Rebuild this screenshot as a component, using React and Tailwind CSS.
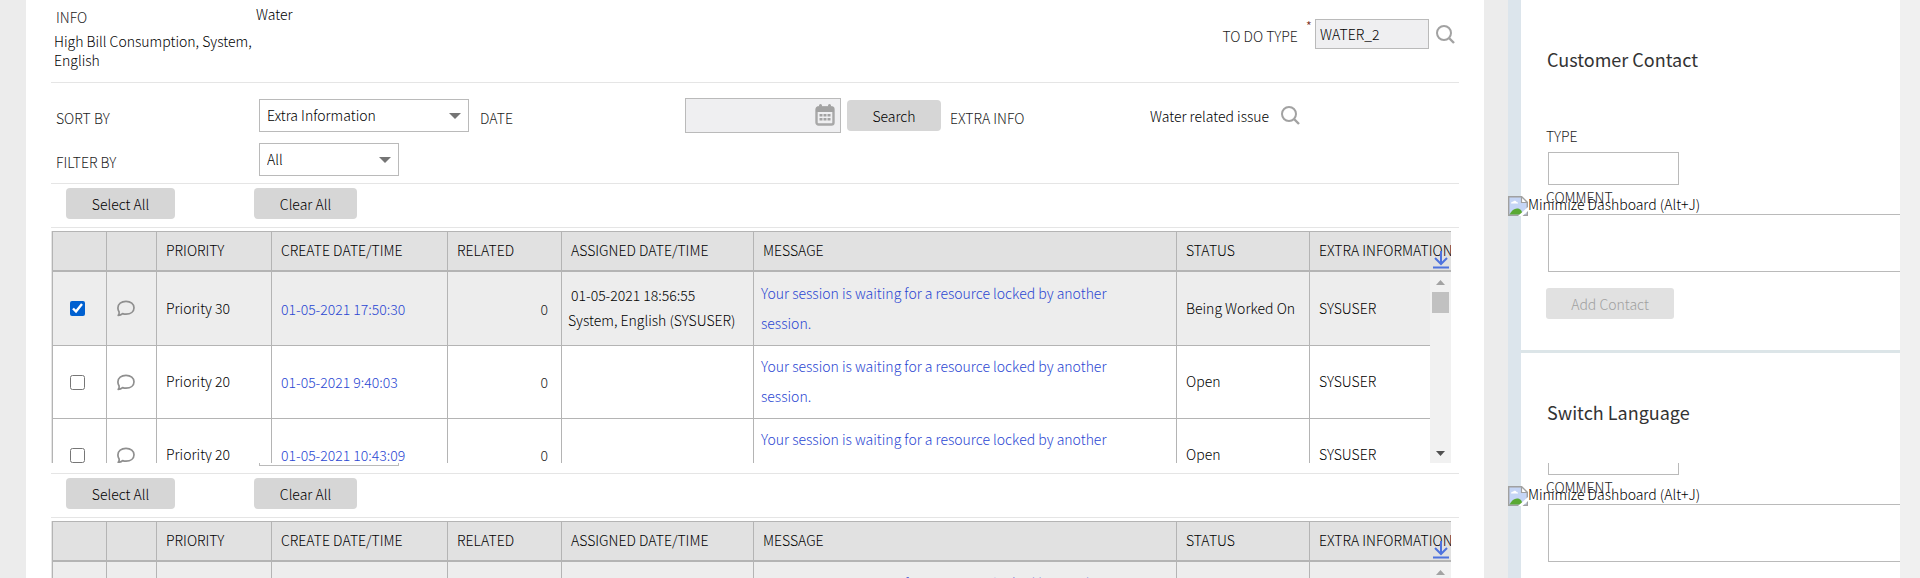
import { useId } from "react";

const rows = [
  { priority: "Priority 30", created: "01-05-2021 17:50:30", assigned: true, status: "Being Worked On", checked: true },
  { priority: "Priority 20", created: "01-05-2021 9:40:03", status: "Open" },
  { priority: "Priority 20", created: "01-05-2021 10:43:09", status: "Open" },
];

const columns = ["PRIORITY", "CREATE DATE/TIME", "RELATED", "ASSIGNED DATE/TIME", "MESSAGE", "STATUS", "EXTRA INFORMATION"];

function SearchIcon() {
  return (
    <svg width="19" height="19" viewBox="0 0 19 19" fill="none" stroke="#a2a2a2" strokeWidth="2" aria-hidden="true">
      <circle cx="8" cy="8" r="7" />
      <path d="M13 13l5 5" strokeWidth="2.4" />
    </svg>
  );
}

function CalendarIcon() {
  return (
    <svg width="20" height="22" viewBox="0 0 20 22" aria-hidden="true">
      <path d="M5.5 1.500v3M14.500 1.500v3" stroke="#a2a2a2" strokeWidth="3" strokeLinecap="round" />
      <rect x="1.500" y="3.500" width="17" height="17" rx="2" fill="#efeff1" stroke="#a8a8a8" strokeWidth="2.400" />
      <path d="M1 8V4.500a2 2 0 0 1 2-2h14a2 2 0 0 1 2 2V8z" fill="#a2a2a2" />
      <path d="M4.500 10h3v2.500h-3zM8.500 10h3v2.500h-3zM12.500 10h3v2.500h-3zM4.500 14h3v2.500h-3zM8.500 14h3v2.500h-3zM12.500 14h3v2.500h-3z" fill="#a2a2a2" />
    </svg>
  );
}

function CommentIcon() {
  return (
    <svg className="block" width="18" height="17" viewBox="0 0 18 17" fill="none" stroke="#8f8f8f" strokeWidth="1.700" strokeLinejoin="round" aria-hidden="true">
      <path d="M1.200 15.300c.9-.9 1.100-2.200.9-3.300C1.300 10.800.9 9.500.9 8 .9 4 4.300 1.300 9 1.300s8 2.700 8 6.500-3.300 6.400-8 6.400c-1.300 0-2.400-.2-3.400-.6-1.200 1.100-2.700 1.700-4.400 1.700z" />
    </svg>
  );
}

function DownloadIcon() {
  return (
    <svg width="16" height="18" viewBox="0 0 16 18" fill="none" stroke="#4f73de" strokeWidth="2" aria-hidden="true">
      <path d="M8 0v12M2 7l6 6 6-6M0 16.500h16" />
    </svg>
  );
}

function BrokenImageIcon() {
  return (
    <svg className="block shrink-0" width="20" height="20" viewBox="0 0 20 20" aria-hidden="true">
      <path d="M.7.7h12.800l5.800 5.800v12.800H.7z" fill="#c5d5f5" stroke="#a0a0a0" strokeWidth="1.400" />
      <path d="M13.500.7v5.800h5.800z" fill="#fff" stroke="#a0a0a0" strokeWidth="1.200" />
      <path d="M3 7.500c0-1.200 1-1.800 2-1.600.5-1.500 3-1.500 3.500.1 1.200 0 1.800.8 1.500 1.500z" fill="#fff" />
      <path d="M1.500 18.600c2-4 4.500-6 7.500-6s4.500 1.500 6 6z" fill="#59a933" />
      <path d="M10 20L20 11v4l-5.500 5z" fill="#fff" />
    </svg>
  );
}

function Select({ id, value, width }) {
  return (
    <div className={"relative " + width}>
      <select id={id} defaultValue={value} className="block h-[33px] w-full appearance-none border border-[#bababa] bg-white pb-0.5 pl-[7px] text-black">
        <option>{value}</option>
      </select>
      <svg className="pointer-events-none absolute top-3.5 right-2" width="12" height="6" viewBox="0 0 12 6" aria-hidden="true">
        <path d="M0 0h12L6 6z" fill="#757575" />
      </svg>
    </div>
  );
}

function GrayButton({ children, className = "" }) {
  return (
    <button type="button" className={"h-[31px] rounded-[4px] bg-[#d6d6d6] text-black " + className}>
      {children}
    </button>
  );
}

function Criteria() {
  const label = "pt-1 text-[#1c1c1c]";
  return (
    <>
      <div className="flex h-[82px] items-start">
        <div className="w-[205px] pl-[3px]">
          <div className="mt-[7px] pl-0.5 leading-5 text-[#1c1c1c]">INFO</div>
          <div className="mt-[5px] leading-[19px]">High Bill Consumption, System, English</div>
        </div>
        <div className="mt-1 leading-5">Water</div>
        <div className="mt-[19px] mr-1 ml-auto flex items-center">
          <label htmlFor="todo-type" className={label}>TO DO TYPE</label>
          <span className="mr-[3px] ml-2 self-start text-[14px] leading-[14px] text-[#7a2a1a]">*</span>
          <input id="todo-type" defaultValue="WATER_2" className="h-[30px] w-[114px] border border-[#bababa] bg-[#efeff1] pl-1" />
          <button type="button" aria-label="Search to do type" className="ml-[7px]"><SearchIcon /></button>
        </div>
      </div>
      <div className="h-[101px] border-t border-[#e5e5e5] pt-[15px]">
        <div className="flex h-[35px] items-center">
          <label htmlFor="sort-by" className={"w-[208px] pl-[5px] " + label}>SORT BY</label>
          <Select id="sort-by" value="Extra Information" width="w-[210px]" />
          <label htmlFor="date" className={"w-[216px] pl-[11px] " + label}>DATE</label>
          <div className="relative">
            <input id="date" className="block h-[35px] w-[156px] border border-[#bababa] bg-[#efeff1] pr-8 pl-2" />
            <button type="button" aria-label="Pick a date" className="absolute top-1.5 right-1.5"><CalendarIcon /></button>
          </div>
          <GrayButton className="ml-1.5 w-[94px]">Search</GrayButton>
          <span className={"w-[209px] pl-[9px] " + label}>EXTRA INFO</span>
          <span>Water related issue</span>
          <button type="button" aria-label="Search extra info" className="ml-3"><SearchIcon /></button>
        </div>
        <div className="mt-2.5 flex items-center">
          <label htmlFor="filter-by" className={"w-[208px] pl-[5px] " + label}>FILTER BY</label>
          <Select id="filter-by" value="All" width="w-[140px]" />
        </div>
      </div>
    </>
  );
}

function Scrollbar() {
  return (
    <div className="absolute top-[41px] right-0 bottom-0 flex w-[21px] flex-col items-center bg-[#f1f1f1]" aria-hidden="true">
      <svg className="mt-2 shrink-0" width="9" height="5" viewBox="0 0 9 5"><path d="M0 5L4.500 0 9 5z" fill="#a3a3a3" /></svg>
      <div className="mt-[7px] h-[21px] w-[17px] shrink-0 bg-[#c1c1c1]" />
      <svg className="mt-auto mb-[7px] shrink-0" width="9" height="5" viewBox="0 0 9 5"><path d="M0 0h9L4.500 5z" fill="#505050" /></svg>
    </div>
  );
}

function Worklist({ height }) {
  const id = useId();
  const cell = "border-b border-l border-[#b4b4b4] p-0 ";
  const text = cell + "pb-0.5 ";
  return (
    <div>
      <div className="flex h-11 items-start gap-[79px] border-t border-[#e5e5e5] pt-1 pl-[15px]">
        <GrayButton className="w-[109px]">Select All</GrayButton>
        <GrayButton className="w-[103px]">Clear All</GrayButton>
      </div>
      <div className="border-t border-[#e5e5e5] pt-[3px]">
        <div className={"relative mr-2 overflow-hidden border-l border-[#e5e5e5] " + height}>
          <table className="w-full table-fixed border-separate border-spacing-0">
            <colgroup>
              <col className="w-[54px]" />
              <col className="w-[50px]" />
              <col className="w-[115px]" />
              <col className="w-[176px]" />
              <col className="w-[114px]" />
              <col className="w-[192px]" />
              <col />
              <col className="w-[133px]" />
              <col className="w-[142px]" />
            </colgroup>
            <thead>
              <tr className="h-[41px] bg-[#e1e1e1] text-left whitespace-nowrap text-black">
                <td className="border-t border-b-2 border-l border-[#b4b4b4]" />
                <td className="border-t border-b-2 border-l border-[#b4b4b4]" />
                {columns.map((c) => (
                  <th key={c} className="border-t border-b-2 border-l border-[#b4b4b4] p-0 pb-0.5 pl-[9px] font-light">{c}</th>
                ))}
              </tr>
            </thead>
            <tbody>
              {rows.map((r, i) => (
                <tr key={i} className={r.checked ? "h-[74px] bg-[#ededed]" : "h-[73px]"}>
                  <td className={cell + "pl-[17px]"}>
                    <input id={id + i} type="checkbox" defaultChecked={r.checked} aria-label={"Select " + r.created} className="block size-[15px] accent-[#0060d0]" />
                  </td>
                  <td className={cell + "pl-2.5"}><CommentIcon /></td>
                  <td className={text + "pl-[9px]"}>{r.priority}</td>
                  <td className={cell + "pl-[9px]"}><a href="#" className="text-[#2a46d2]">{r.created}</a></td>
                  <td className={cell + "pr-[13px] text-right text-[#1c1c1c]"}>0</td>
                  <td className={text + "pl-1.5 leading-[25px]"}>
                    {r.assigned && (
                      <>
                        <div className="pl-[3px]">01-05-2021 18:56:55</div>
                        <div>System, English (SYSUSER)</div>
                      </>
                    )}
                  </td>
                  <td className={text + "pr-8 pl-[7px] leading-[30px]"}>
                    <a href="#" className="text-[#2a46d2]">Your session is waiting for a resource locked by another session.</a>
                  </td>
                  <td className={text + "pl-[9px]"}>{r.status}</td>
                  <td className={text + "pl-[9px]"}>SYSUSER</td>
                </tr>
              ))}
            </tbody>
          </table>
          <Scrollbar />
          <button type="button" aria-label="Download" className="absolute top-5 right-0.5 leading-none"><DownloadIcon /></button>
        </div>
      </div>
    </div>
  );
}

function MinimizeDashboard({ className }) {
  return (
    <button type="button" className={"absolute left-0 flex items-start whitespace-nowrap text-black " + className}>
      <BrokenImageIcon />
      <span className="leading-4">Minimize Dashboard (Alt+J)</span>
    </button>
  );
}

function Comment() {
  const id = useId();
  return (
    <>
      <label htmlFor={id} className="mt-0.5 -ml-0.5 block leading-5 text-[#1c1c1c]">COMMENT</label>
      <textarea id={id} className="mt-[7px] block h-[58px] w-full resize-none border border-r-0 border-[#bababa]" />
    </>
  );
}

export default function App() {
  return (
    <div className="flex min-h-screen bg-[#ececec] font-['Noto_Sans_CJK_SC',sans-serif] text-[14px] leading-5 font-light text-black">
      <main className="ml-[26px] min-w-0 flex-1 bg-white pr-[25px] pl-[25px]">
        <Criteria />
        <Worklist height="h-[232px]" />
        <div className="mb-[7px] ml-[208px] h-[3px] w-[140px] border border-t-0 border-[#bababa]" />
        <Worklist height="h-[57px]" />
      </main>

      <aside className="relative ml-6 w-[392px] shrink-0 border-l-[13px] border-[#dce5ec] bg-white">
        <section className="h-[353px] border-b-[3px] border-[#dce5e8] pl-[27px]">
          <h2 className="-ml-px pt-[45px] text-[18px] leading-7 font-normal text-[#333]">Customer Contact</h2>
          <label htmlFor="type" className="mt-[53px] -ml-0.5 block leading-5 text-[#1c1c1c]">TYPE</label>
          <input id="type" className="mt-1.5 block h-[33px] w-[131px] border border-[#bababa]" />
          <Comment />
          <button type="button" disabled className="mt-4 -ml-0.5 h-[31px] w-32 rounded-[3px] bg-[#e1e1e1] text-[#a0a0a0]">Add Contact</button>
        </section>
        <section className="h-[110px] pl-[27px]">
          <h2 className="-ml-px pt-[45px] text-[18px] leading-7 font-normal text-[#333]">Switch Language</h2>
        </section>
        <section className="pl-[27px]">
          <div className="h-3 w-[131px] border border-t-0 border-[#bababa]" />
          <Comment />
        </section>
        <div className="absolute inset-y-0 -left-[13px]">
          <MinimizeDashboard className="top-[196px]" />
          <MinimizeDashboard className="top-[486px]" />
        </div>
      </aside>
      <div className="w-5 shrink-0 bg-[#f0f0f0]" />
    </div>
  );
}
